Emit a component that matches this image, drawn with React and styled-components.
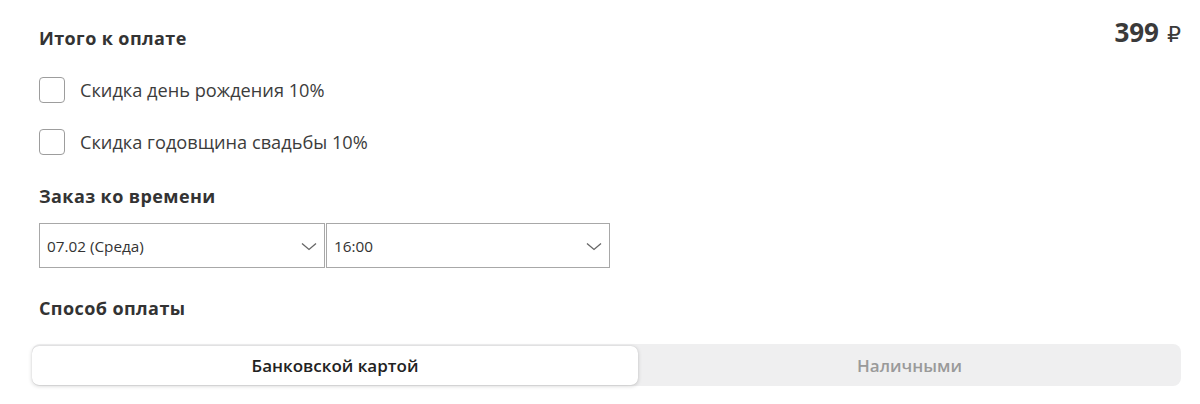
import React, { useState } from "react";
import styled, { createGlobalStyle } from "styled-components";

const GlobalStyle = createGlobalStyle`
  body {
    margin: 0;
    background: #ffffff;
    font-family: "Open Sans", "Noto Sans", sans-serif;
    color: #333333;
  }
`;

const Page = styled.div`
  width: 1200px;
  height: 404px;
  box-sizing: border-box;
  padding: 16px 19px 0 32px;
`;

const TotalRow = styled.div`
  display: flex;
  justify-content: space-between;
  align-items: flex-start;
  padding-left: 7px;
`;

const Heading = styled.h3`
  margin: 0;
  font-size: 18px;
  font-weight: 700;
  color: #333333;
  letter-spacing: 0.4px;
  line-height: 24px;
  padding-top: ${(p) => p.$top || 0}px;
`;

const Price = styled.div`
  font-size: 26px;
  font-weight: 700;
  color: #3a3a3a;
  line-height: 32px;

  span {
    font-family: "DejaVu Sans", "Liberation Sans", sans-serif;
    font-weight: 400;
    font-size: 22px;
    margin-left: 8px;
  }
`;

const Options = styled.div`
  display: flex;
  flex-direction: column;
  gap: 26px;
  margin-top: 26px;
  padding-left: 7px;
`;

const CheckRow = styled.label`
  display: flex;
  align-items: center;
  gap: 15px;
  font-size: 18.2px;
  color: #3c3c3c;
  cursor: pointer;
`;

const Box = styled.span`
  width: 26px;
  height: 26px;
  box-sizing: border-box;
  border: 1.5px solid #9d9d9d;
  border-radius: 4px;
  background: #fff;
`;

const Section = styled.div`
  padding-left: 7px;
  margin-top: ${(p) => p.$top}px;
`;

const Selects = styled.div`
  display: flex;
  gap: 1px;
  margin-top: 15px;
`;

const Select = styled.div`
  width: ${(p) => p.$w}px;
  height: 45px;
  box-sizing: border-box;
  border: 1.5px solid #a8a8a8;
  display: flex;
  align-items: center;
  justify-content: space-between;
  padding: 0 7px 0 7px;
  font-size: 15.3px;
  color: #333;
`;

const Segmented = styled.div`
  display: flex;
  height: 42px;
  margin-top: 24px;
  padding: 2px 0 1px 0;
  box-sizing: border-box;
  background: #efeff0;
  border-radius: 8px;
`;

const Tab = styled.button`
  flex: ${(p) => (p.$active ? "0 0 606px" : "1")};
  border: none;
  border-radius: 7px;
  font-family: inherit;
  font-size: 17px;
  font-weight: 600;
  color: ${(p) => (p.$active ? "#222" : "#9a9a9a")};
  background: ${(p) => (p.$active ? "#fff" : "transparent")};
  box-shadow: ${(p) =>
    p.$active ? "0 1px 4px rgba(0,0,0,0.18), 0 0 1px rgba(0,0,0,0.15)" : "none"};
  cursor: pointer;
`;

const Chevron = () => (
  <svg width="16" height="16" viewBox="0 0 16 16" fill="none">
    <path d="M1 5.5L8 11.5l7-6" stroke="#666" strokeWidth="1.3" />
  </svg>
);

export default function App() {
  const [pay, setPay] = useState("card");
  return (
    <Page>
      <GlobalStyle />
      <TotalRow>
        <Heading $top={10}>Итого к оплате</Heading>
        <Price>
          399<span>₽</span>
        </Price>
      </TotalRow>
      <Options>
        <CheckRow>
          <Box />
          Скидка день рождения 10%
        </CheckRow>
        <CheckRow>
          <Box />
          Скидка годовщина свадьбы 10%
        </CheckRow>
      </Options>
      <Section $top={29}>
        <Heading>Заказ ко времени</Heading>
        <Selects>
          <Select $w={286}>
            07.02 (Среда)
            <Chevron />
          </Select>
          <Select $w={284}>
            16:00
            <Chevron />
          </Select>
        </Selects>
      </Section>
      <Section $top={28}>
        <Heading>Способ оплаты</Heading>
      </Section>
      <Segmented>
        <Tab $active={pay === "card"} onClick={() => setPay("card")}>
          Банковской картой
        </Tab>
        <Tab $active={pay === "cash"} onClick={() => setPay("cash")}>
          Наличными
        </Tab>
      </Segmented>
    </Page>
  );
}
